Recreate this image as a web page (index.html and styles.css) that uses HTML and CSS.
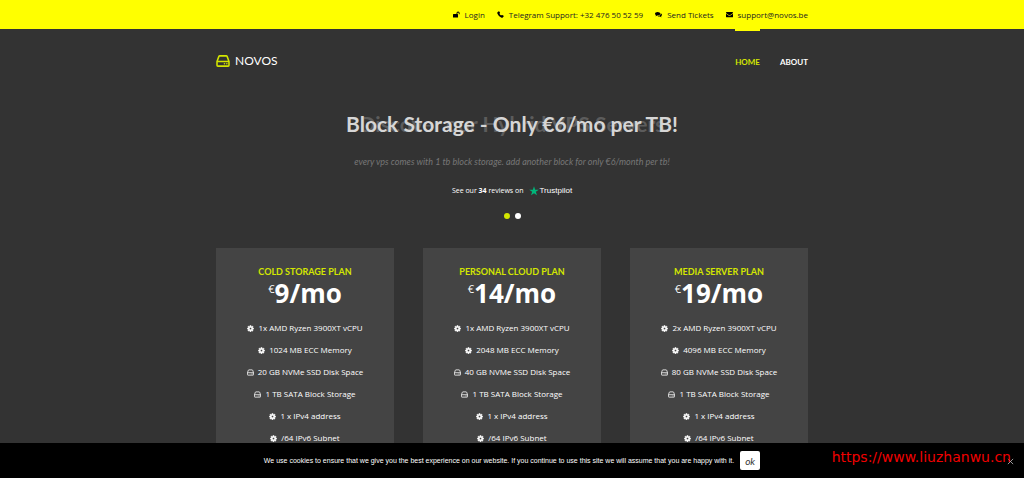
FILE: index.html
```html
<!DOCTYPE html>
<html lang="en">
<head>
<meta charset="utf-8">
<meta name="viewport" content="width=device-width, initial-scale=1">
<title>Novos</title>
<link rel="stylesheet" href="styles.css">
</head>
<body>
<svg class="sprite" aria-hidden="true">
  <symbol id="unlock" viewBox="0 0 16 14"><path d="M1 6h7V4a3.600 3.600 0 0 1 7.200 0v2.500h-2V4a1.600 1.600 0 0 0-3.200 0v2h.5q1 0 1 1v6q0 1-1 1H1q-1 0-1-1V7q0-1 1-1z"/></symbol>
  <symbol id="phone" viewBox="0 0 14 14"><path d="M1 2.500 3.500.500q.7-.4 1.100.300l1.500 2.800q.3.600-.2 1.100L4.800 5.700q1.200 2.300 3.500 3.500l1-1.100q.5-.5 1.100-.2l2.800 1.500q.7.400.3 1.100l-2 2.500q-1 .8-2.500.3Q2.800 11 .7 5 .200 3.500 1 2.500z"/></symbol>
  <symbol id="chat" viewBox="0 0 16 14"><path d="M6 1c3.300 0 6 1.800 6 4.200S9.300 9.500 6 9.500L4.600 9.400Q3 10.700 1 10.800L2.300 8.500Q0 7.200 0 5.200C0 2.800 2.700 1 6 1z"/><path d="M13 4q3 1.300 3 3.700 0 1.900-2.200 3.100l1.200 2.400q-2-.2-3.500-1.500-3.500.6-5.500-1.100Q13 10.300 13 4z"/></symbol>
  <symbol id="mail" viewBox="0 0 16 14"><path d="M1.500 1h13Q16 1 16 2.500q0 1.200-1.200 2L9.500 8Q8 9 6.500 8L1.200 4.500Q0 3.700 0 2.500 0 1 1.500 1z"/><path d="M0 5.500 6 9.500q2 1.200 4 0l6-4V12q0 1.500-1.500 1.500h-13Q0 13.500 0 12z"/></symbol>
  <symbol id="gear" viewBox="0 0 16 16"><path stroke="currentColor" stroke-width="1" stroke-linejoin="round" fill-rule="evenodd" d="M6.800 1h2.400l.4 1.800 1.200.5 1.600-1 1.600 1.700-1 1.500.5 1.200 1.700.4v2.200l-1.700.4-.5 1.200 1 1.600-1.600 1.600-1.600-1-1.200.5-.4 1.700H6.800l-.4-1.700-1.200-.5-1.600 1L2 12.500l1-1.600-.5-1.200L.8 9.300V7.100l1.700-.4L3 5.500 2 4l1.600-1.700 1.600 1 1.200-.5zM8 5.600a2.500 2.500 0 1 0 0 5 2.500 2.500 0 0 0 0-5z"/></symbol>
  <symbol id="drive" viewBox="0 0 16 14"><path fill="none" stroke="currentColor" stroke-width="1.800" stroke-linejoin="round" d="M1 7.500 3.200 1.600Q3.500 1 4.200 1h7.600q.7 0 1 .6L15 7.500V12q0 1-1 1H2q-1 0-1-1zM1 7.500h14"/><circle cx="9.700" cy="10.300" r=".9"/><circle cx="12.500" cy="10.300" r=".9"/></symbol>
  <symbol id="star" viewBox="0 0 20 20"><path fill="#00b67a" d="M10 .5 12.300 7.400h7.300l-5.900 4.300 2.200 7L10 14.400l-5.900 4.300 2.200-7L.4 7.400h7.300z"/></symbol>
</svg>

<div class="topbar">
  <div class="container topbar-links">
    <a href="#login"><svg class="icon"><use href="#unlock"/></svg>Login</a>
    <a href="#telegram"><svg class="icon"><use href="#phone"/></svg>Telegram Support: +32 476 50 52 59</a>
    <a href="#tickets"><svg class="icon"><use href="#chat"/></svg>Send Tickets</a>
    <a href="#mail"><svg class="icon"><use href="#mail"/></svg>support@novos.be</a>
  </div>
</div>

<header class="container header">
  <a class="brand" href="#home"><svg class="brand-icon"><use href="#drive"/></svg>NOVOS</a>
  <nav class="nav">
    <a class="active" href="#home">HOME</a>
    <a href="#about">ABOUT</a>
  </nav>
</header>

<main class="container">
  <section class="hero">
    <div class="slides">
      <h2 class="slide-title leaving" aria-hidden="true">Discover our Hybrid VPS Servers</h2>
      <h1 class="slide-title">Block Storage - Only €6/mo per TB!</h1>
    </div>
    <p class="tagline">every vps comes with 1 tb block storage. add another block for only €6/month per tb!</p>
    <a class="reviews" href="#reviews"><span>See our <b>34</b> reviews on</span><span class="trust"><svg class="star"><use href="#star"/></svg>Trustpilot</span></a>
    <div class="dots">
      <button class="dot current" type="button" aria-label="Slide 1"></button>
      <button class="dot" type="button" aria-label="Slide 2"></button>
    </div>
  </section>

  <section class="plans">
    <article class="plan">
      <h3>COLD STORAGE PLAN</h3>
      <p class="price"><sup>€</sup>9/mo</p>
      <ul>
        <li><svg class="icon"><use href="#gear"/></svg>1x AMD Ryzen 3900XT vCPU</li>
        <li><svg class="icon"><use href="#gear"/></svg>1024 MB ECC Memory</li>
        <li><svg class="icon"><use href="#drive"/></svg>20 GB NVMe SSD Disk Space</li>
        <li><svg class="icon"><use href="#drive"/></svg>1 TB SATA Block Storage</li>
        <li><svg class="icon"><use href="#gear"/></svg>1 x IPv4 address</li>
        <li><svg class="icon"><use href="#gear"/></svg>/64 IPv6 Subnet</li>
      </ul>
    </article>
    <article class="plan">
      <h3>PERSONAL CLOUD PLAN</h3>
      <p class="price"><sup>€</sup>14/mo</p>
      <ul>
        <li><svg class="icon"><use href="#gear"/></svg>1x AMD Ryzen 3900XT vCPU</li>
        <li><svg class="icon"><use href="#gear"/></svg>2048 MB ECC Memory</li>
        <li><svg class="icon"><use href="#drive"/></svg>40 GB NVMe SSD Disk Space</li>
        <li><svg class="icon"><use href="#drive"/></svg>1 TB SATA Block Storage</li>
        <li><svg class="icon"><use href="#gear"/></svg>1 x IPv4 address</li>
        <li><svg class="icon"><use href="#gear"/></svg>/64 IPv6 Subnet</li>
      </ul>
    </article>
    <article class="plan">
      <h3>MEDIA SERVER PLAN</h3>
      <p class="price"><sup>€</sup>19/mo</p>
      <ul>
        <li><svg class="icon"><use href="#gear"/></svg>2x AMD Ryzen 3900XT vCPU</li>
        <li><svg class="icon"><use href="#gear"/></svg>4096 MB ECC Memory</li>
        <li><svg class="icon"><use href="#drive"/></svg>80 GB NVMe SSD Disk Space</li>
        <li><svg class="icon"><use href="#drive"/></svg>1 TB SATA Block Storage</li>
        <li><svg class="icon"><use href="#gear"/></svg>1 x IPv4 address</li>
        <li><svg class="icon"><use href="#gear"/></svg>/64 IPv6 Subnet</li>
      </ul>
    </article>
  </section>
</main>

<div class="cookies">
  <span>We use cookies to ensure that we give you the best experience on our website. If you continue to use this site we will assume that you are happy with it.</span>
  <button class="ok" type="button">ok</button>
  <button class="close" type="button" aria-label="Close"><svg viewBox="0 0 8 8"><path d="M1 1l6 6M7 1 1 7"/></svg></button>
  <span class="site-url">https://www.liuzhanwu.cn</span>
</div>
</body>
</html>
```
FILE: styles.css
```css
* { box-sizing: border-box; }
body {
  margin: 0;
  background: #333;
  color: #fff;
  font: 7px/10px "Open Sans", sans-serif;
}
a { color: inherit; text-decoration: none; }
h1, h2, h3, p, ul { margin: 0; padding: 0; }
button { padding: 0; border: 0; cursor: pointer; }
.sprite { position: absolute; width: 0; height: 0; }
svg { fill: currentColor; }
.icon { width: 7px; height: 7px; flex: none; }

.container { width: 592px; max-width: 100%; margin: 0 auto; }

.topbar { background: #ff0; color: #222; }
.topbar-links {
  display: flex;
  justify-content: flex-end;
  align-items: center;
  gap: 12px;
  height: 29px;
  font-size: 8px;
}
.topbar-links a { display: flex; align-items: center; gap: 5px; }
.topbar-links .icon { color: #000; }

.header {
  display: flex;
  justify-content: space-between;
  height: 64px;
  font-family: Lato, sans-serif;
}
.brand { display: flex; align-items: center; gap: 5px; font-size: 12px; }
.brand-icon { width: 14px; height: 12px; color: #d3e600; }
.nav { display: flex; gap: 20px; font-size: 8px; font-weight: 700; line-height: 63px; }
.nav a { border-top: 2px solid transparent; }
.nav .active { color: #d3e600; border-color: #ff0; }

.hero { display: flex; flex-direction: column; align-items: center; padding-top: 16px; }
.slides { display: grid; justify-items: center; }
.slide-title {
  grid-area: 1 / 1;
  color: #d6d6d6;
  font: 700 21px/30px Lato, sans-serif;
}
.leaving { color: #5c5c5c; }
.tagline {
  margin-top: 16px;
  color: #777;
  font: italic 9px/14px Lato, sans-serif;
}
.reviews { display: flex; align-items: center; gap: 5px; margin-top: 16px; line-height: 12px; }
.trust { display: flex; align-items: center; gap: 1px; font-family: "Liberation Sans", sans-serif; font-size: 8px; }
.star { width: 10px; height: 10px; }
.dots { display: flex; gap: 5px; margin-top: 16px; }
.dot { width: 6px; height: 6px; border-radius: 50%; background: #fff; }
.current { background: #d3e600; }

.plans { display: grid; grid-template-columns: repeat(3, 1fr); gap: 29px; margin-top: 29px; }
.plan { padding: 18px 10px 32px; background: #444; text-align: center; }
.plan h3 { color: #d3e600; font: 700 9px/12px Lato, sans-serif; }
.price { font-size: 26px; font-weight: 700; line-height: 30px; }
.price sup { font-size: 11px; font-weight: 400; line-height: 0; vertical-align: 10px; }
.plan ul { margin-top: 9px; list-style: none; font-size: 8px; }
.plan li { display: flex; justify-content: center; align-items: center; gap: 4px; height: 22px; }

.cookies {
  position: fixed;
  inset: auto 0 0;
  display: flex;
  justify-content: center;
  align-items: center;
  gap: 6px;
  height: 35px;
  background: #000;
  font: 7px/10px "Liberation Sans", sans-serif;
}
.ok {
  width: 20px;
  height: 19px;
  border-radius: 2px;
  background: #fff;
  color: #333;
  font: italic 10px/14px Lato, sans-serif;
}
.site-url {
  position: absolute;
  right: 13px;
  top: 6px;
  color: #f00000;
  font: 14px/16px "DejaVu Sans", sans-serif;
}
.close { position: absolute; right: 10px; top: 15px; display: flex; background: none; }
.close svg { width: 7px; height: 7px; fill: none; stroke: #aaa; }
```
